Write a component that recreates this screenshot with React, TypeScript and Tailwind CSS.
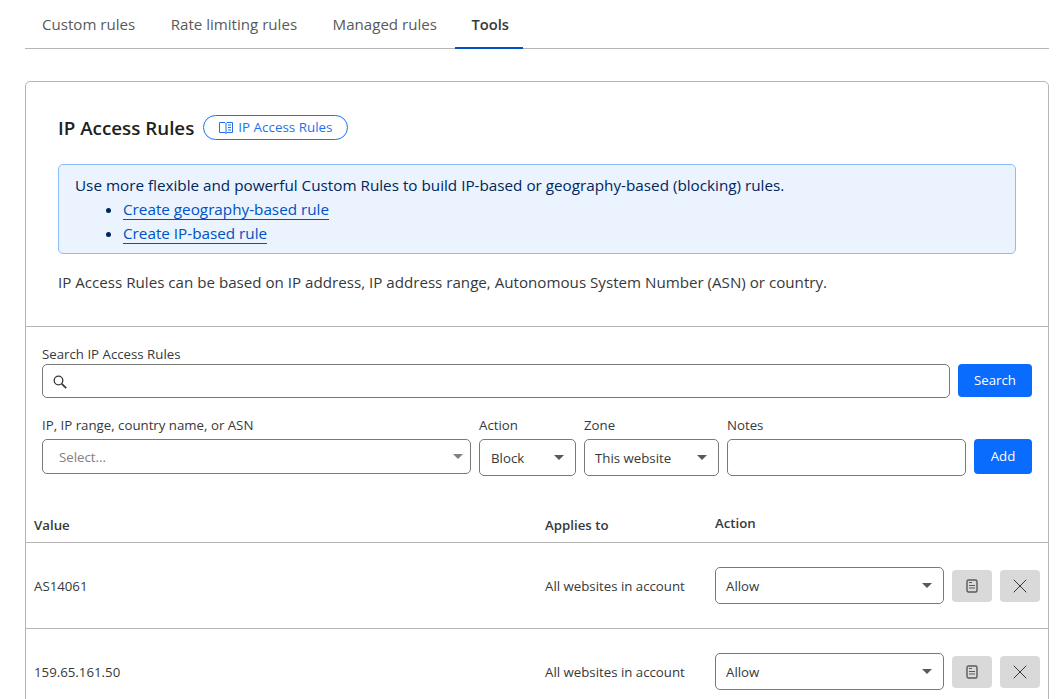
import { X } from "lucide-react";

const tabs = ["Custom rules", "Rate limiting rules", "Managed rules"];

const Caret = ({ color = "border-t-[#595959]" }: { color?: string }) => (
    <span className={`w-0 h-0 border-x-[5px] border-x-transparent border-t-[5px] ${color}`} />
);

const SelectBox = ({ value, className, placeholder }: { value: string; className: string; placeholder?: boolean }) => (
    <div className={`flex items-center justify-between border border-[#797979] rounded-[5px] bg-white ${className}`}>
        <span className={placeholder ? "text-[#808080]" : "text-[#36393a]"}>{value}</span>
        <Caret color={placeholder ? "border-t-[#808080]" : "border-t-[#595959]"} />
    </div>
);

const NoteIcon = () => (
    <svg width="12" height="14" viewBox="0 0 12 14" fill="none" stroke="#595959">
        <rect x="1" y="1" width="10" height="12" rx="1.5" strokeWidth="1.4" />
        <path d="M3 3.500h3M3 6.500h6M3 9h6" strokeWidth="1.2" />
    </svg>
);

const BookIcon = () => (
    <svg width="14" height="13" viewBox="0 0 14 13" fill="none" stroke="#1a73f0" strokeWidth="1">
        <path d="M.5 1.500h5.500l1 1v10l-1-1H.5zM7 2.500l1-1h5.500v10H8l-1 1" />
        <path d="M9 4h3M9 6.500h3M9 9h3" />
    </svg>
);

const SearchIcon = () => (
    <svg className="mt-0.5" width="14" height="14" viewBox="0 0 14 14" fill="none" stroke="#36393a">
        <circle cx="5.500" cy="5.500" r="4.300" strokeWidth="1.300" />
        <path d="M8.800 8.800l4.400 4.400" strokeWidth="1.700" />
    </svg>
);

const Row = ({ value }: { value: string }) => (
    <div className="grid grid-cols-[511px_170px_1fr] items-center h-[86px] border-t border-[#b5b5b5] pl-2">
        <span>{value}</span>
        <span>All websites in account</span>
        <div className="flex items-center">
            <SelectBox value="Allow" className="w-[229px] h-[37px] pl-[10px] pr-[11px]" />
            <button className="w-10 h-8 ml-2 flex items-center justify-center bg-[#d9d9d9] rounded-[4px]">
                <NoteIcon />
            </button>
            <button className="w-10 h-8 ml-2 flex items-center justify-center bg-[#d9d9d9] rounded-[4px]">
                <X size={24} strokeWidth={1} color="#36393a" />
            </button>
        </div>
    </div>
);

export default function App() {
    return (
        <div className="h-[699px] overflow-hidden bg-white pl-[25px] pr-[15px] text-[13.25px] leading-5 text-[#36393a] font-['Open_Sans','Noto_Sans',sans-serif]">
            <div className="flex h-[49px] border-b border-[#b5b5b5] text-[15.1px] text-[#595959]">
                {tabs.map((t) => (
                    <div key={t} className="pl-[17px] pr-[18px] pt-[14px] mr-[0.5px]">{t}</div>
                ))}
                <div className="pl-[16px] pr-[14px] pt-[14px] -mb-px border-b-2 border-[#0051c3] text-[14.7px] font-semibold text-[#36393a]">Tools</div>
            </div>

            <div className="mt-8 border border-[#b5b5b5] rounded-[5px]">
                <div className="px-8 pt-[33px] h-[244px]">
                    <div className="flex items-center h-[26px]">
                        <h2 className="text-[18.8px] font-semibold text-[#1d1f20]">IP Access Rules</h2>
                        <a className="ml-[9px] -mt-0.5 flex items-center gap-[5px] h-[25px] px-[15px] border border-[#1a73f0] rounded-full text-[13.4px] text-[#1a73f0]">
                            <BookIcon />
                            IP Access Rules
                        </a>
                    </div>
                    <div className="mt-[23px] h-[90px] border border-[#8cbcf5] rounded-[5px] bg-[#eaf3fe] pl-4 pt-2 text-[15.25px] leading-6 text-[#00265c]">
                        <p>Use more flexible and powerful Custom Rules to build IP-based or geography-based (blocking) rules.</p>
                        <ul className="list-disc pl-12">
                            <li><a className="text-[#0051c3] border-b border-[#0051c3]">Create geography-based rule</a></li>
                            <li><a className="text-[#0051c3] border-b border-[#0051c3]">Create IP-based rule</a></li>
                        </ul>
                    </div>
                    <p className="mt-[18px] text-[15.15px]">IP Access Rules can be based on IP address, IP address range, Autonomous System Number (ASN) or country.</p>
                </div>

                <div className="border-t border-[#b5b5b5] pl-4 pr-4 pt-[17px] h-[175px]">
                    <label className="block h-[20px]">Search IP Access Rules</label>
                    <div className="flex gap-2">
                        <div className="flex-1 h-[34px] flex items-center pl-[10px] border border-[#797979] rounded-[5px]">
                            <SearchIcon />
                        </div>
                        <button className="w-[74px] h-[33px] pb-0.5 bg-[#0a6cff] text-white rounded-[4px]">Search</button>
                    </div>
                    <div className="mt-[17px] grid grid-cols-[429px_97px_135px_239px_58px] gap-x-2">
                        <label>IP, IP range, country name, or ASN</label>
                        <label>Action</label>
                        <label>Zone</label>
                        <label>Notes</label>
                        <span />
                        <SelectBox value="Select..." placeholder className="mt-1 h-[35px] pl-4 pr-[7px]" />
                        <SelectBox value="Block" className="mt-1 h-[37px] pl-[11px] pr-[11px]" />
                        <SelectBox value="This website" className="mt-1 h-[37px] pl-[10px] pr-[11px]" />
                        <div className="mt-1 h-[37px] border border-[#797979] rounded-[5px]" />
                        <button className="mt-1 h-[35px] pb-0.5 bg-[#0a6cff] text-white rounded-[4px]">Add</button>
                    </div>
                </div>

                <div className="grid grid-cols-[511px_170px_1fr] items-end h-[41px] pl-2 font-semibold">
                    <span className="pb-[7px]">Value</span>
                    <span className="pb-[7px]">Applies to</span>
                    <span className="pb-[9px]">Action</span>
                </div>
                <Row value="AS14061" />
                <Row value="159.65.161.50" />
            </div>
        </div>
    );
}
